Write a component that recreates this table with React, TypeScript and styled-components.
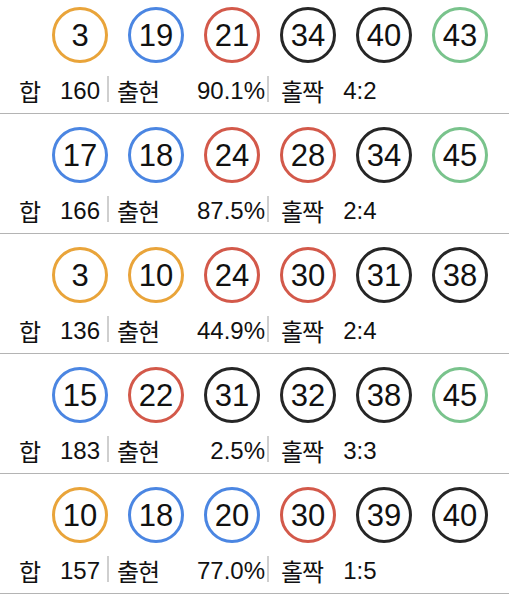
import React from 'react';
import styled, { createGlobalStyle } from 'styled-components';

type Draw = { balls: number[]; sum: number; rate: string; oddEven: string };

const draws: Draw[] = [
    { balls: [3, 19, 21, 34, 40, 43], sum: 160, rate: '90.1%', oddEven: '4:2' },
    { balls: [17, 18, 24, 28, 34, 45], sum: 166, rate: '87.5%', oddEven: '2:4' },
    { balls: [3, 10, 24, 30, 31, 38], sum: 136, rate: '44.9%', oddEven: '2:4' },
    { balls: [15, 22, 31, 32, 38, 45], sum: 183, rate: '2.5%', oddEven: '3:3' },
    { balls: [10, 18, 20, 30, 39, 40], sum: 157, rate: '77.0%', oddEven: '1:5' },
];

const ballColor = (n: number) => {
    if (n <= 10) return '#e9a43a';
    if (n <= 20) return '#4b86e2';
    if (n <= 30) return '#d3594a';
    if (n <= 40) return '#262626';
    return '#79c38c';
};

function App() {
    return (
        <>
            <GlobalStyle />
            <List>
                {draws.map((d, i) => (
                    <Row key={i}>
                        <Balls>
                            {d.balls.map((n) => (
                                <Ball key={n} $color={ballColor(n)}>{n}</Ball>
                            ))}
                        </Balls>
                        <Stats>
                            <Group $width={81}>
                                <Label>합</Label>
                                <Value>{d.sum}</Value>
                            </Group>
                            <Bar $left={7} />
                            <Group $width={148} $left={8}>
                                <Label>출현</Label>
                                <Value>{d.rate}</Value>
                            </Group>
                            <Bar $left={2} />
                            <Group $left={12}>
                                <Label>홀짝</Label>
                                <Value $left={20}>{d.oddEven}</Value>
                            </Group>
                        </Stats>
                    </Row>
                ))}
            </List>
        </>
    );
}

export default App;


const GlobalStyle = createGlobalStyle`
    body {
        margin: 0;
        background: #ffffff;
        font-family: "Liberation Sans", "Noto Sans CJK KR", sans-serif;
        color: #111111;
        overflow: hidden;
    }
`

const List = styled.div`
    margin-top: -6px;
`

const Row = styled.div`
    height: 120px;
    padding-top: 13px;
    box-sizing: border-box;
    border-bottom: 1px solid #b4b4b4;
`

const Balls = styled.div`
    display: flex;
    gap: 20px;
    padding-left: 52px;
`

const Ball = styled.div<{ $color: string }>`
    width: 56px;
    height: 56px;
    box-sizing: border-box;
    border: 3px solid ${(p) => p.$color};
    border-radius: 50%;
    display: flex;
    align-items: center;
    justify-content: center;
    font-size: 31px;
    line-height: 1;
    padding-top: 1px;
    color: #111111;
`

const Stats = styled.div`
    display: flex;
    align-items: flex-start;
    height: 30px;
    margin-top: 13px;
    padding-left: 19px;
    font-size: 24px;
    line-height: 30px;
`

const Group = styled.div<{ $width?: number; $left?: number }>`
    display: flex;
    justify-content: ${(p) => (p.$width ? 'space-between' : 'flex-start')};
    width: ${(p) => (p.$width ? `${p.$width}px` : 'auto')};
    margin-left: ${(p) => p.$left ?? 0}px;
    white-space: nowrap;
`

const Label = styled.span`
    font-family: "Noto Sans CJK KR", sans-serif;
    letter-spacing: -1px;
`

const Value = styled.span<{ $left?: number }>`
    margin-left: ${(p) => p.$left ?? 0}px;
`

const Bar = styled.div<{ $left: number }>`
    width: 2px;
    height: 26px;
    background: #cfcfcf;
    margin-left: ${(p) => p.$left}px;
`
